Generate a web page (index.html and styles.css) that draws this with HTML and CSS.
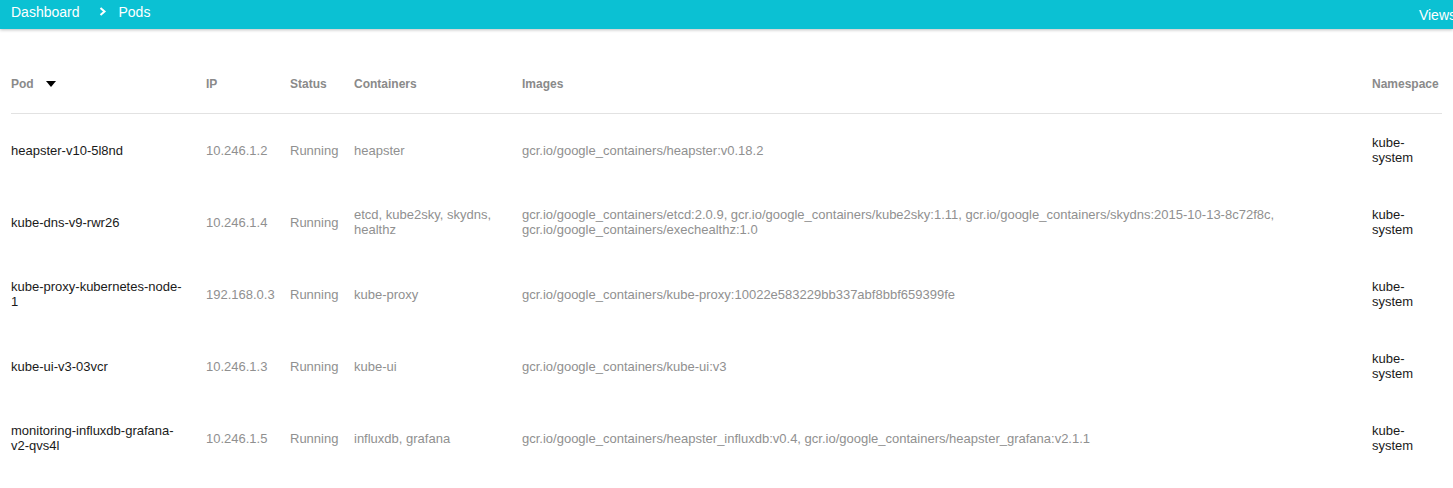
FILE: index.html
```html
<!DOCTYPE html>
<html>
<head>
<meta charset="utf-8">
<link rel="stylesheet" href="styles.css">
</head>
<body>
<header class="toolbar">
  <nav class="crumbs">
    <span class="crumb">Dashboard</span>
    <svg class="chev" width="8" height="9" viewBox="0 0 8 9"><path d="M1.5 1 L5.5 4.5 L1.5 8" fill="none" stroke="#fff" stroke-width="2"/></svg>
    <span class="crumb">Pods</span>
  </nav>
  <span class="views">Views</span>
</header>
<main class="content">
  <table class="pods">
    <colgroup>
      <col class="c-pod"><col class="c-ip"><col class="c-status"><col class="c-cont"><col class="c-img"><col class="c-ns">
    </colgroup>
    <thead>
      <tr>
        <th><span class="sort">Pod <svg class="tri" width="10" height="6" viewBox="0 0 10 6"><path d="M0 0 H10 L5 6 Z" fill="#000"/></svg></span></th>
        <th>IP</th><th>Status</th><th>Containers</th><th>Images</th><th>Namespace</th>
      </tr>
    </thead>
    <tbody>
      <tr>
        <td class="dark name">heapster-v10-5l8nd</td><td>10.246.1.2</td><td>Running</td><td>heapster</td>
        <td>gcr.io/google_containers/heapster:v0.18.2</td><td class="dark">kube-system</td>
      </tr>
      <tr>
        <td class="dark name">kube-dns-v9-rwr26</td><td>10.246.1.4</td><td>Running</td><td>etcd, kube2sky, skydns, healthz</td>
        <td>gcr.io/google_containers/etcd:2.0.9, gcr.io/google_containers/kube2sky:1.11, gcr.io/google_containers/skydns:2015-10-13-8c72f8c, gcr.io/google_containers/exechealthz:1.0</td><td class="dark">kube-system</td>
      </tr>
      <tr>
        <td class="dark name">kube-proxy-kubernetes-node-1</td><td>192.168.0.3</td><td>Running</td><td>kube-proxy</td>
        <td>gcr.io/google_containers/kube-proxy:10022e583229bb337abf8bbf659399fe</td><td class="dark">kube-system</td>
      </tr>
      <tr>
        <td class="dark name">kube-ui-v3-03vcr</td><td>10.246.1.3</td><td>Running</td><td>kube-ui</td>
        <td>gcr.io/google_containers/kube-ui:v3</td><td class="dark">kube-system</td>
      </tr>
      <tr>
        <td class="dark name">monitoring-influxdb-grafana-v2-qvs4l</td><td>10.246.1.5</td><td>Running</td><td>influxdb, grafana</td>
        <td>gcr.io/google_containers/heapster_influxdb:v0.4, gcr.io/google_containers/heapster_grafana:v2.1.1</td><td class="dark">kube-system</td>
      </tr>
    </tbody>
  </table>
</main>
</body>
</html>
```
FILE: styles.css
```css
html, body {
  margin: 0;
  padding: 0;
  overflow: hidden;
  background: #fff;
  font-family: "Liberation Sans", Arial, Helvetica, sans-serif;
}

.toolbar {
  height: 29px;
  background: #0bc1d3;
  box-shadow: 0 1px 3px rgba(0, 0, 0, 0.25);
  display: flex;
  justify-content: space-between;
  align-items: flex-start;
  overflow: hidden;
  color: #fff;
  font-size: 14px;
  line-height: 24px;
  position: relative;
  z-index: 1;
}

.crumbs {
  display: flex;
  align-items: center;
  padding-left: 11px;
  height: 24px;
}

.chev {
  margin: 0 12px 2px 19px;
}

.views {
  margin-top: 3px;
  margin-right: -3px;
}

.content {
  padding: 25px 0 0 11px;
}

.pods {
  width: calc(100% - 11px);
  border-collapse: collapse;
  table-layout: fixed;
}

.c-pod { width: 195px; }
.c-ip { width: 84px; }
.c-status { width: 64px; }
.c-cont { width: 168px; }
.c-img { width: 850px; }

.pods th {
  height: 59px;
  padding: 0;
  text-align: left;
  font-size: 12px;
  font-weight: bold;
  color: #8a8a8a;
  vertical-align: middle;
  border-bottom: 1px solid #e2e2e2;
}

.sort {
  display: inline-flex;
  align-items: center;
}

.tri {
  margin-left: 12px;
}

.pods td {
  height: 72px;
  padding: 0 12px 0 0;
  font-size: 13px;
  line-height: 15px;
  color: #909090;
  vertical-align: middle;
}

.pods td.name {
  padding-right: 20px;
}

.pods td.dark {
  color: #1a1a1a;
}
```
